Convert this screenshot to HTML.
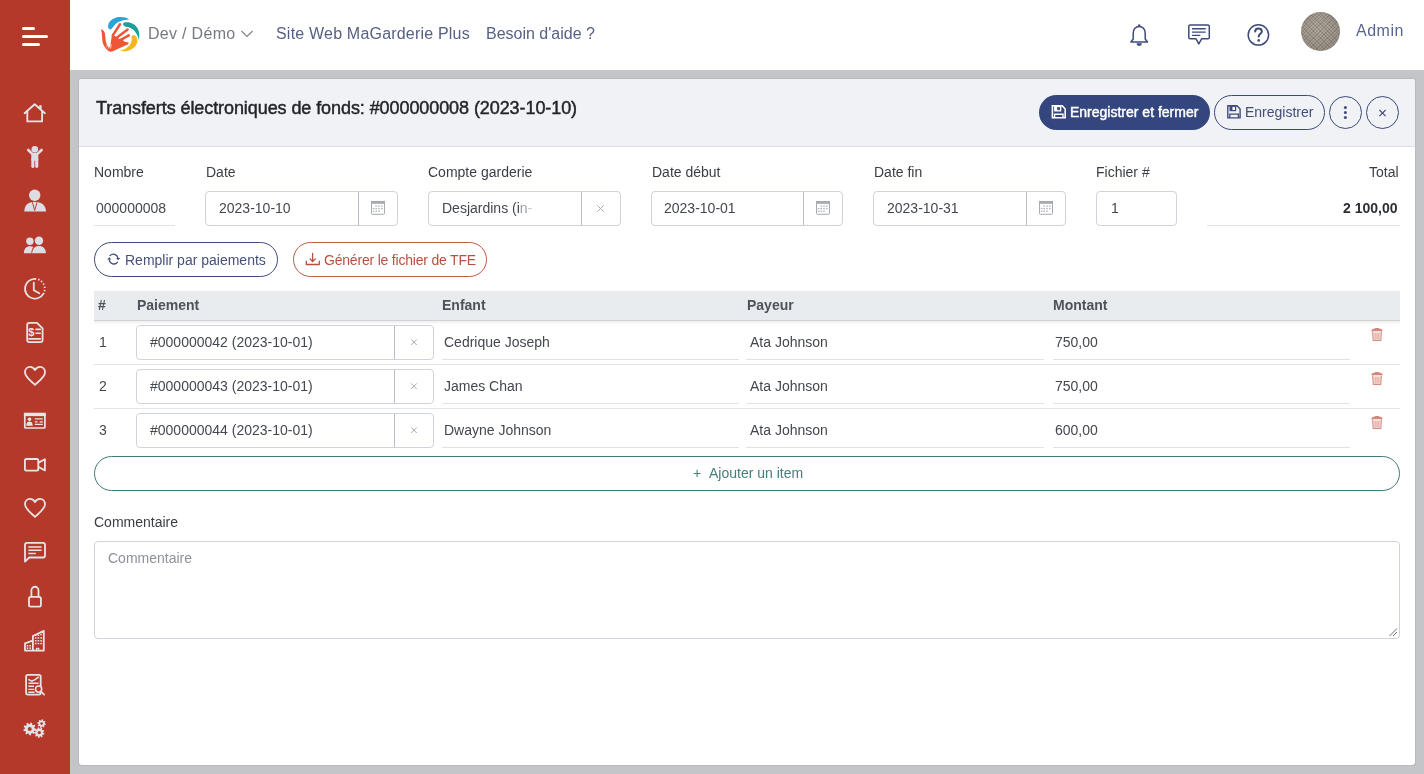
<!DOCTYPE html>
<html><head><meta charset="utf-8">
<style>
*{box-sizing:border-box;margin:0;padding:0}
html,body{width:1424px;height:774px;overflow:hidden;font-family:"Liberation Sans",sans-serif;background:#c4c5c9;color:#212529;position:relative}
.a{position:absolute}
.t{position:absolute;white-space:nowrap;line-height:1;will-change:transform}
#side{left:0;top:0;width:70px;height:774px;background:#b5392a}
#top{left:70px;top:0;width:1354px;height:70px;background:#fff}
#card{left:79px;top:79px;width:1336px;height:686px;background:#fff;border-radius:3px;box-shadow:0 0 0 1px #b9babe, 1px 1px 0 #adaeb2}
#chead{left:79px;top:79px;width:1336px;height:68px;background:#f0f2f6;border-bottom:1px solid #dcdfe4;border-radius:3px 3px 0 0}
.lbl{font-size:14px;color:#3a3e44}
.val{font-size:14px;color:#43484e}
.box{position:absolute;border:1px solid #ced4da;border-radius:4px;background:#fff}
.add{position:absolute;border-left:1px solid #b9bec4}
.ul{position:absolute;height:1px;background:#dfe2e6}
.nav{font-size:16px;color:#566084}
.pill{position:absolute;border-radius:18px}
svg{position:absolute;overflow:visible}
.ic{stroke:#e3dcdc;fill:none;stroke-width:2;stroke-linecap:round;stroke-linejoin:round}
.icf{fill:#dcdde4}
</style></head><body>
<div id="side" class="a"></div>
<div id="top" class="a"></div>
<div id="card" class="a"></div>
<div id="chead" class="a"></div>

<!-- sidebar hamburger -->
<div class="a" style="left:22px;top:27px;width:13px;height:3px;border-radius:2px;background:#fff"></div>
<div class="a" style="left:22px;top:35px;width:26px;height:3px;border-radius:2px;background:#fff"></div>
<div class="a" style="left:22px;top:43px;width:18px;height:3px;border-radius:2px;background:#fff"></div>


<!-- logo -->
<svg style="left:0;top:0" width="200" height="70" viewBox="0 0 200 70">
 <path fill="#2aa3d6" d="M129.2 19.4 C125 16.6 117.5 16.2 112.5 19.2 C109 21.3 107.6 24.6 108.2 27.6 C108.7 29.6 110.8 30 112 28.6 C113.2 26.4 115 24 117.6 22.4 C121 20.4 125.5 19.6 129.2 19.4 Z"/>
 <path fill="#1a9f9a" d="M124.2 22.6 C129.5 21.4 135 23.6 137.8 28.8 C139.4 32 139.6 36.4 138.8 40 C138.2 36.5 136.6 32.6 133.6 30 C131.4 28 128.6 27 126 26.8 C123.2 26.6 122.2 23.4 124.2 22.6 Z"/>
 <path fill="#f4b61f" d="M133.6 35 C136.8 35.6 138 39 137.2 42.6 C136.2 46.8 132 50 127 51 C124.5 51.5 121.8 51.3 119.6 50.8 C123.5 50 127.5 48 129.8 45 C131.4 43 131.8 40.6 131.6 38.6 C131.4 36.4 132.2 35 133.6 35 Z"/>
 <g fill="#ee5636">
  <path d="M112 34.4 L115 36 L118.5 38.4 L121.5 40.2 L122 43.5 L113.5 48 L110 47.6 Z"/>
  <path d="M101 29.2 C103 29.6 104.6 31.4 105 34 C105.4 37.4 105.6 41 106.4 43.6 C107.2 45.6 108.6 47 110 47.6 L113 43 C114 41.2 115.6 39.6 117.6 39.2 L121.4 38.8 L124.6 41.8 L128.6 42.4 C128.8 43.6 128.2 44.4 127 44.8 C123 46.6 118 48.8 113.5 51 C111.6 51.9 109.6 51.9 108.4 50.9 C105.2 48.4 103 45 102.4 41 C102 37 102.2 33 101 29.2 Z"/>
 </g>
 <g stroke="#ee5636" stroke-width="2.5" stroke-linecap="round" fill="none">
  <path d="M112.8 35.4 L120 24.2"/>
  <path d="M117 37.6 L127.6 29.6"/>
  <path d="M119 40.8 L128.8 35.4"/>
 </g>
 <g stroke="#fff" stroke-width="0.7" fill="none">
  <path d="M106.8 47.2 L107.6 42.6 M108.6 48.6 L109.6 43.2 M110.6 48.6 L111.2 44.2"/>
 </g>
</svg>
<!-- header nav -->
<div class="t nav" style="left:147.6px;top:26px;color:#767a81;letter-spacing:0.3px">Dev / Démo</div>
<svg style="left:239.5px;top:29px" width="14" height="10" viewBox="0 0 14 10"><path d="M1.5 2 L7 7.5 L12.5 2" fill="none" stroke="#80848b" stroke-width="1.2"/></svg>
<div class="t nav" style="left:276px;top:26px;letter-spacing:0.2px">Site Web MaGarderie Plus</div>
<div class="t nav" style="left:486px;top:26px">Besoin d'aide ?</div>

<!-- header right -->
<div class="t nav" style="left:1356px;top:22.5px;color:#5b6592;letter-spacing:0.5px">Admin</div>
<div class="a" style="left:1301px;top:12px;width:39px;height:39px;border-radius:50%;background:repeating-linear-gradient(45deg,rgba(70,62,55,.22) 0 1px,transparent 1px 2.5px),repeating-linear-gradient(-45deg,rgba(70,62,55,.22) 0 1px,transparent 1px 2.5px),radial-gradient(circle at 45% 45%,#b7aea4,#9d948a 70%,#8a8179)"></div>

<!-- card title -->
<div class="t" style="left:95.5px;top:98.6px;font-size:18px;color:#22252a;-webkit-text-stroke:0.45px #22252a;letter-spacing:-0.08px">Transferts électroniques de fonds: #000000008 (2023-10-10)</div>

<!-- card header buttons -->
<div class="pill" style="left:1039px;top:95px;width:171px;height:35px;background:#34467e"></div>
<div class="t" style="left:1069.5px;top:105px;font-size:14px;color:#fff;-webkit-text-stroke:0.45px #fff">Enregistrer et fermer</div>
<div class="pill" style="left:1214px;top:95px;width:111px;height:35px;border:1px solid #3b4a7a"></div>
<div class="t" style="left:1245px;top:105px;font-size:14px;color:#414d78">Enregistrer</div>
<div class="pill" style="left:1329px;top:96px;width:33px;height:33px;border:1px solid #3b4a7a;border-radius:50%"></div>
<div class="pill" style="left:1366px;top:96px;width:33px;height:33px;border:1px solid #3b4a7a;border-radius:50%"></div>

<!-- form labels -->
<div class="t lbl" style="left:94.3px;top:165.4px">Nombre</div>
<div class="t lbl" style="left:205.8px;top:165.4px">Date</div>
<div class="t lbl" style="left:428.4px;top:165.4px">Compte garderie</div>
<div class="t lbl" style="left:651.9px;top:165.4px">Date début</div>
<div class="t lbl" style="left:873.9px;top:165.4px">Date fin</div>
<div class="t lbl" style="left:1096.3px;top:165.4px">Fichier #</div>
<div class="t lbl" style="left:1369.4px;top:165.4px">Total</div>

<!-- form inputs -->
<div class="ul" style="left:94px;top:225px;width:81px"></div>
<div class="t val" style="left:96.3px;top:200.9px">000000008</div>

<div class="box" style="left:205px;top:191px;width:193px;height:35px"><div class="add" style="left:152px;top:0;width:40px;height:33px"></div></div>
<div class="t val" style="left:218.6px;top:200.9px">2023-10-10</div>

<div class="box" style="left:428px;top:191px;width:193px;height:35px"><div class="add" style="left:152px;top:0;width:40px;height:33px"></div></div>
<div class="t val" style="left:441.6px;top:200.9px">Desjardins (i<span style="color:#9aa0a6">n</span><span style="color:#c8ccd0">-</span></div>

<div class="box" style="left:651px;top:191px;width:192px;height:35px"><div class="add" style="left:151px;top:0;width:40px;height:33px"></div></div>
<div class="t val" style="left:664px;top:200.9px">2023-10-01</div>

<div class="box" style="left:873px;top:191px;width:193px;height:35px"><div class="add" style="left:152px;top:0;width:40px;height:33px"></div></div>
<div class="t val" style="left:886.5px;top:200.9px">2023-10-31</div>

<div class="box" style="left:1096px;top:191px;width:81px;height:35px"></div>
<div class="t val" style="left:1110.7px;top:200.9px">1</div>

<div class="ul" style="left:1207px;top:225px;width:193px"></div>
<div class="t val" style="left:1342.9px;top:200.9px;font-weight:bold;color:#2b2f34">2 100,00</div>

<!-- action buttons -->
<div class="pill" style="left:94px;top:242px;width:184px;height:35px;border:1px solid #3e4b78"></div>
<div class="t" style="left:124.9px;top:252.9px;font-size:14px;color:#46517a">Remplir par paiements</div>
<div class="pill" style="left:293px;top:242px;width:194px;height:35px;border:1px solid #bf5a48"></div>
<div class="t" style="left:324px;top:252.9px;font-size:14px;color:#b8503e;letter-spacing:-0.2px">Générer le fichier de TFE</div>

<!-- table header -->
<div class="a" style="left:94px;top:291px;width:1306px;height:30px;background:#e9ecef;border-bottom:1px solid #cfd1d4"></div><div class="a" style="left:94px;top:321px;width:1306px;height:4px;background:linear-gradient(#efefef,#fff)"></div>
<div class="t" style="left:98.3px;top:297.9px;font-size:14px;font-weight:bold;color:#4d535a">#</div>
<div class="t" style="left:136.5px;top:297.9px;font-size:14px;font-weight:bold;color:#4d535a">Paiement</div>
<div class="t" style="left:442px;top:297.9px;font-size:14px;font-weight:bold;color:#4d535a">Enfant</div>
<div class="t" style="left:747.3px;top:297.9px;font-size:14px;font-weight:bold;color:#4d535a">Payeur</div>
<div class="t" style="left:1053px;top:297.9px;font-size:14px;font-weight:bold;color:#4d535a">Montant</div>

<!-- rows -->
<div class="t val" style="left:98.5px;top:334.9px">1</div>
<div class="box" style="left:136px;top:325px;width:298px;height:35px"><div class="add" style="left:257px;top:0;width:40px;height:33px"></div></div>
<div class="t val" style="left:150px;top:334.9px">#000000042 (2023-10-01)</div>
<div class="ul" style="left:442px;top:359px;width:297px"></div>
<div class="t val" style="left:444.3px;top:334.9px">Cedrique Joseph</div>
<div class="ul" style="left:746px;top:359px;width:298px"></div>
<div class="t val" style="left:749.5px;top:334.9px">Ata Johnson</div>
<div class="ul" style="left:1053px;top:359px;width:297px"></div>
<div class="t val" style="left:1055px;top:334.9px">750,00</div>
<div class="ul" style="left:94px;top:364px;width:1306px;background:#e3e6e9"></div>
<div class="t val" style="left:98.5px;top:378.9px">2</div>
<div class="box" style="left:136px;top:369px;width:298px;height:35px"><div class="add" style="left:257px;top:0;width:40px;height:33px"></div></div>
<div class="t val" style="left:150px;top:378.9px">#000000043 (2023-10-01)</div>
<div class="ul" style="left:442px;top:403px;width:297px"></div>
<div class="t val" style="left:444.3px;top:378.9px">James Chan</div>
<div class="ul" style="left:746px;top:403px;width:298px"></div>
<div class="t val" style="left:749.5px;top:378.9px">Ata Johnson</div>
<div class="ul" style="left:1053px;top:403px;width:297px"></div>
<div class="t val" style="left:1055px;top:378.9px">750,00</div>
<div class="ul" style="left:94px;top:408px;width:1306px;background:#e3e6e9"></div>
<div class="t val" style="left:98.5px;top:422.9px">3</div>
<div class="box" style="left:136px;top:413px;width:298px;height:35px"><div class="add" style="left:257px;top:0;width:40px;height:33px"></div></div>
<div class="t val" style="left:150px;top:422.9px">#000000044 (2023-10-01)</div>
<div class="ul" style="left:442px;top:447px;width:297px"></div>
<div class="t val" style="left:444.3px;top:422.9px">Dwayne Johnson</div>
<div class="ul" style="left:746px;top:447px;width:298px"></div>
<div class="t val" style="left:749.5px;top:422.9px">Ata Johnson</div>
<div class="ul" style="left:1053px;top:447px;width:297px"></div>
<div class="t val" style="left:1055px;top:422.9px">600,00</div>


<!-- ajouter -->
<div class="pill" style="left:94px;top:456px;width:1306px;height:35px;border:1px solid #3f7b78"></div>
<div class="t" style="left:693px;top:466px;font-size:14px;color:#437f7b">+</div>
<div class="t" style="left:708.5px;top:466px;font-size:14px;color:#437f7b">Ajouter un item</div>

<!-- commentaire -->
<div class="t lbl" style="left:94.4px;top:515px">Commentaire</div>
<div class="box" style="left:94px;top:541px;width:1306px;height:98px"></div>
<div class="t" style="left:107.5px;top:550.6px;font-size:14px;color:#8c9197">Commentaire</div>


<!-- sidebar icons -->
<svg style="left:0;top:0" width="70" height="774" viewBox="0 0 70 774">
<g stroke="#e8e4e6" fill="none" stroke-width="1.8" stroke-linecap="round" stroke-linejoin="round">
 <path d="M24.6 113.2 L34.7 104.3 L44.9 113.2"/>
 <path d="M27.3 110.8 V121.4 H42.1 V110.8"/>
 <path d="M40.4 105.2 V108.8" stroke-width="2.4" stroke-linecap="butt"/>
 <path d="M34.9 278.8 A9.9 9.9 0 1 0 43.5 293.6"/>
 <path d="M34.9 278.8 A9.9 9.9 0 0 1 43.5 293.6" stroke-dasharray="1.4 1.9" stroke-linecap="butt"/>
 <path d="M33.8 282.6 V290.2 L39.3 293.2"/>
 <path d="M29.3 322.8 H37 L42.6 328.4 V340 Q42.6 342.1 40.5 342.1 H29.3 Q27.2 342.1 27.2 340 V325 Q27.2 322.8 29.3 322.8 Z"/>
 <path d="M36 329.4 H40.3 M36 333.2 H40.3 M29 338.9 H40.3" stroke-width="1.6"/>
 <path d="M35 384.8 C31 381 25 377 25 372.2 C25 369 27.3 366.8 30 366.8 C32.2 366.8 34 368 35 370 C36 368 37.8 366.8 40 366.8 C42.7 366.8 45 369 45 372.2 C45 377 39 381 35 384.8 Z"/>
 <path d="M35 516.8 C31 513 25 509 25 504.2 C25 501 27.3 498.8 30 498.8 C32.2 498.8 34 500 35 502 C36 500 37.8 498.8 40 498.8 C42.7 498.8 45 501 45 504.2 C45 509 39 513 35 516.8 Z"/>
 <rect x="24.8" y="414" width="20.1" height="14" rx="0.8" stroke-width="1.7"/>
 <path d="M34.8 418.9 H42.8 M34.8 421.8 H37.6 M39.6 421.8 H42.8 M34.8 424.4 H42.8" stroke-width="1.3" stroke-linecap="butt"/>
 <rect x="24.9" y="459" width="13.4" height="11.6" rx="1.6"/>
 <path d="M38.6 462.6 L44.9 459.2 V470.4 L38.6 467"/>
 <path d="M27 542.8 H43 Q45 542.8 45 544.8 V555.5 Q45 557.5 43 557.5 H29.2 L25 561.6 V544.8 Q25 542.8 27 542.8 Z"/>
 <path d="M28.3 547 H41.6 M28.3 550.2 H41.6 M28.3 553.5 H35.8" stroke-width="1.5" stroke-linecap="butt"/>
 <path d="M31.4 596.6 V590.3 A3.55 3.55 0 0 1 38.5 590.3 V596.6"/>
 <rect x="29" y="596.8" width="11.9" height="9.8" rx="1.6"/>
 <path d="M25 650.6 V643.4 L32.8 640.6 M32.9 650.6 V636 L43.8 630.9 V650.6 Z M25 650.6 H43.8"/>
 <path d="M36.5 650.6 V648.3 H38.7 V650.6" stroke-width="1.3"/>
 <rect x="26.1" y="674.8" width="14.6" height="19.8" rx="1.8"/>
 <path d="M28.8 679.7 L31.6 681.2 L35.1 679.6 L38.4 677.2" stroke-width="1.5"/>
 <path d="M28.5 683.2 H38.6 M28.3 686.3 H34 M28.3 689.4 H34 M28.3 692.3 H34.5" stroke-width="1.4" stroke-linecap="butt"/>
 <circle cx="38.6" cy="689.1" r="3.1" stroke-width="1.6" fill="#b5392a"/>
 <path d="M40.9 691.4 L44.2 694.6" stroke-width="1.6"/>
</g>
<g fill="#e8e4e6">
 <rect x="23.9" y="412.7" width="21.9" height="3.4"/>
 <circle cx="29.5" cy="419.2" r="1.8"/>
 <path d="M26.3 425.8 C26.3 422.7 27.6 421.5 29.5 421.5 C31.4 421.5 32.7 422.7 32.7 425.8 Z"/>
 <g fill="#e8e4e6" stroke="none">
  <rect x="34.9" y="634.5" width="1.6" height="1.5"/><rect x="37.6" y="634.5" width="1.6" height="1.5"/><rect x="40.3" y="633.8" width="1.6" height="1.5"/>
  <rect x="34.9" y="637.2" width="1.6" height="1.5"/><rect x="37.6" y="637.2" width="1.6" height="1.5"/><rect x="40.3" y="637.2" width="1.6" height="1.5"/>
  <rect x="34.9" y="640" width="1.6" height="1.5"/><rect x="37.6" y="640" width="1.6" height="1.5"/><rect x="40.3" y="640" width="1.6" height="1.5"/>
  <rect x="34.9" y="642.8" width="1.6" height="1.5"/><rect x="37.6" y="642.8" width="1.6" height="1.5"/><rect x="40.3" y="642.8" width="1.6" height="1.5"/>
  <rect x="26.7" y="645" width="1.6" height="1.5"/><rect x="29.4" y="645" width="1.6" height="1.5"/>
  <rect x="26.7" y="647.4" width="1.6" height="1.5"/><rect x="29.4" y="647.4" width="1.6" height="1.5"/>
 </g>
</g>
<!-- filled people icons -->
<g fill="#dcdee6">
 <circle cx="34.8" cy="149.2" r="3.3"/>
 <path d="M28.2 150 L32 153.6" stroke="#dcdee6" stroke-width="2.6" stroke-linecap="round"/>
 <path d="M41.6 150 L37.8 153.6" stroke="#dcdee6" stroke-width="2.6" stroke-linecap="round"/>
 <rect x="31.3" y="152.8" width="7" height="8" rx="1.5"/>
 <rect x="31.3" y="158" width="3.1" height="10" rx="1.4"/>
 <rect x="35.2" y="158" width="3.1" height="10" rx="1.4"/>
 <circle cx="34.7" cy="195.3" r="5.7"/>
 <path d="M24.3 211.6 C24.3 205.5 28 201.8 34.7 201.8 C41.4 201.8 46 205.5 46 211.6 Z"/>
 <path d="M32.4 202.2 L34.7 210.5 L37 202.2" fill="none" stroke="#b5392a" stroke-width="0.9"/>
 <circle cx="29.9" cy="241.3" r="3.7"/>
 <circle cx="39" cy="240.7" r="4.2"/>
 <path d="M23.9 253.3 C23.9 248.8 26.4 246.3 29.9 246.3 C31.5 246.3 32.6 246.7 33.2 247.2 C32 248.6 31.4 250.6 31.4 253.3 Z"/>
 <path d="M32.2 253.3 C32.2 248.5 35 245.9 39 245.9 C43 245.9 45.9 248.5 45.9 253.3 Z"/>
</g>
<!-- dollar -->
<text x="31.4" y="335.6" font-family="Liberation Sans" font-size="11" font-weight="bold" fill="#e8e4e6" text-anchor="middle">$</text>
<!-- gears -->
<g fill="#e2e2e8"><path d="M36.09 728.65 L35.92 730.42 L34.37 730.39 L33.78 731.62 L34.76 732.82 L33.49 734.06 L32.32 733.04 L31.07 733.60 L31.06 735.15 L29.28 735.29 L29.04 733.76 L27.73 733.39 L26.72 734.56 L25.28 733.52 L26.07 732.20 L25.31 731.07 L23.78 731.33 L23.34 729.60 L24.80 729.09 L24.94 727.74 L23.60 726.95 L24.38 725.35 L25.82 725.90 L26.80 724.95 L26.28 723.49 L27.91 722.76 L28.66 724.11 L30.02 724.01 L30.56 722.56 L32.28 723.04 L31.98 724.56 L33.09 725.36 L34.44 724.60 L35.44 726.07 L34.23 727.04 L34.57 728.36 Z"/><path d="M45.90 723.78 L45.63 725.10 L44.50 724.95 L43.94 725.78 L44.51 726.77 L43.39 727.51 L42.70 726.61 L41.71 726.80 L41.42 727.90 L40.10 727.63 L40.25 726.50 L39.42 725.94 L38.43 726.51 L37.69 725.39 L38.59 724.70 L38.40 723.71 L37.30 723.42 L37.57 722.10 L38.70 722.25 L39.26 721.42 L38.69 720.43 L39.81 719.69 L40.50 720.59 L41.49 720.40 L41.78 719.30 L43.10 719.57 L42.95 720.70 L43.78 721.26 L44.77 720.69 L45.51 721.81 L44.61 722.50 L44.80 723.49 Z"/><path d="M44.53 733.45 L44.10 734.86 L42.79 734.55 L42.12 735.44 L42.76 736.61 L41.52 737.41 L40.72 736.34 L39.64 736.59 L39.38 737.90 L37.91 737.71 L37.99 736.38 L36.99 735.87 L35.95 736.71 L34.95 735.63 L35.86 734.65 L35.43 733.62 L34.09 733.59 L34.02 732.12 L35.35 731.96 L35.68 730.90 L34.67 730.02 L35.56 728.84 L36.69 729.57 L37.62 728.97 L37.42 727.65 L38.86 727.32 L39.24 728.60 L40.35 728.74 L41.04 727.59 L42.35 728.27 L41.83 729.50 L42.58 730.32 L43.85 729.89 L44.42 731.25 L43.23 731.85 L43.28 732.96 Z"/></g>
<g fill="#b5392a">
 <circle cx="29.7" cy="728.9" r="2"/><circle cx="41.6" cy="723.6" r="1.3"/><circle cx="39.3" cy="732.6" r="1.7"/>
</g>
</svg>

<!-- header icons -->
<svg style="left:0;top:0" width="1424" height="774" viewBox="0 0 1424 774">
<g stroke="#3f4b7b" fill="none" stroke-width="1.5" stroke-linejoin="round" stroke-linecap="round">
 <path d="M1130.9 42 H1147.5 L1145.2 39 V33.2 C1145.2 29.2 1142.6 26.4 1139.2 26.4 C1135.8 26.4 1133.2 29.2 1133.2 33.2 V39 Z"/>
 <path d="M1190.2 24.9 H1207.9 Q1209.3 24.9 1209.3 26.3 V37.4 Q1209.3 38.8 1207.9 38.8 H1201.6 L1198.8 43.9 L1196 38.8 H1190.2 Q1188.8 38.8 1188.8 37.4 V26.3 Q1188.8 24.9 1190.2 24.9 Z"/>
 <path d="M1192 28.7 H1205.7 M1192 32.1 H1205.7 M1192 35.4 H1200.3" stroke-width="1.4" stroke-linecap="butt"/>
 <circle cx="1258.4" cy="34.9" r="10.2"/>
</g>
<circle cx="1139.2" cy="25.4" r="1.2" fill="#3f4b7b"/>
<path d="M1136.6 43.2 A2.6 2.6 0 0 0 1141.8 43.2 Z" fill="#3f4b7b"/>
<path d="M1255.2 31.6 C1255.2 29.6 1256.6 28.4 1258.5 28.4 C1260.4 28.4 1261.8 29.6 1261.8 31.4 C1261.8 33.6 1258.7 34 1258.7 36.6" fill="none" stroke="#3f4b7b" stroke-width="2" stroke-linecap="round"/><circle cx="1258.7" cy="40.4" r="1.3" fill="#3f4b7b"/>

<!-- floppy white -->
<g stroke="#fff" fill="none" stroke-width="1.6" stroke-linejoin="miter">
 <path d="M1052.4 105.8 H1062.2 L1065.2 109 V117.8 H1052.4 Z"/>
 <rect x="1055" y="106.4" width="5.6" height="4.4" stroke-width="1.4"/>
 <path d="M1054.6 117.8 V114.2 H1063 V117.8" stroke-width="1.4"/>
</g>
<rect x="1054.2" y="105.8" width="3" height="5" fill="#fff"/>
<!-- floppy navy -->
<g stroke="#3f4b7b" fill="none" stroke-width="1.4" stroke-linejoin="miter">
 <path d="M1227.8 105.8 H1237 L1240.1 109 V117.9 H1227.8 Z"/>
 <rect x="1230.2" y="106.2" width="5.4" height="4.4" stroke-width="1.2"/>
 <path d="M1229.8 117.9 V114.1 H1238.4 V117.9" stroke-width="1.3"/>
</g>
<rect x="1229.8" y="105.8" width="2.6" height="4.8" fill="#3f4b7b"/>
<!-- kebab + close -->
<circle cx="1345.4" cy="107.6" r="1.5" fill="#3f4b7b"/>
<circle cx="1345.4" cy="112.6" r="1.5" fill="#3f4b7b"/>
<circle cx="1345.4" cy="117.6" r="1.5" fill="#3f4b7b"/>
<path d="M1379.4 110 L1385.6 116.2 M1385.6 110 L1379.4 116.2" stroke="#3f4b7b" stroke-width="1.1"/>

<!-- calendars -->
<g id="cal">
 <rect x="371.5" y="201.5" width="13" height="12.8" rx="0.8" fill="none" stroke="#a6abb0" stroke-width="1"/>
 <rect x="371" y="201" width="14" height="2.8" fill="#a6abb0"/>
 <g fill="#b3b7bc">
  <rect x="375.4" y="205.5" width="1.6" height="1.3"/><rect x="378.2" y="205.5" width="1.6" height="1.3"/><rect x="381" y="205.5" width="1.6" height="1.3"/>
  <rect x="372.8" y="208" width="1.6" height="1.3"/><rect x="375.4" y="208" width="1.6" height="1.3"/><rect x="378.2" y="208" width="1.6" height="1.3"/><rect x="381" y="208" width="1.6" height="1.3"/>
  <rect x="372.8" y="210.6" width="1.6" height="1.3"/><rect x="375.4" y="210.6" width="1.6" height="1.3"/><rect x="378.2" y="210.6" width="1.6" height="1.3"/>
 </g>
</g>
<use href="#cal" x="445" y="0"/>
<use href="#cal" x="668" y="0"/>

<!-- x in compte garderie and rows -->
<path d="M597.5 205.5 L603.5 211.5 M603.5 205.5 L597.5 211.5" stroke="#a4a9ae" stroke-width="1"/>
<g id="rx"><path d="M411.2 339.4 L416.8 345 M416.8 339.4 L411.2 345" stroke="#a4a9ae" stroke-width="1"/></g>
<use href="#rx" y="44"/><use href="#rx" y="88"/>

<!-- trash -->
<g id="tr" opacity="0.8">
 <path d="M1371.3 331.2 C1371.3 329.6 1373 328.8 1375 328.6 L1375.4 327.9 H1378.6 L1379 328.6 C1381 328.8 1382.7 329.6 1382.7 331.2 Z" fill="#c8685a"/>
 <path d="M1372.6 331.4 L1373.2 340.4 H1380.8 L1381.4 331.4" fill="#f3d9d4" stroke="#cf7567" stroke-width="1.1"/>
 <path d="M1375.2 333 V339 M1377 333 V339 M1378.8 333 V339" stroke="#d58a7e" stroke-width="0.9"/>
</g>
<use href="#tr" y="44"/><use href="#tr" y="88"/>

<!-- refresh icon -->
<g stroke="#3e4b78" fill="none" stroke-width="1.3" stroke-linecap="round">
 <path d="M110 255.6 A4.6 4.6 0 0 1 117.9 258"/>
 <path d="M117.4 262.3 A4.6 4.6 0 0 1 109.3 260"/>
</g>
<path d="M116.1 257.9 L120.2 257.9 L118.1 260.2 Z" fill="#3e4b78"/>
<path d="M107.2 259.6 L111.3 259.6 L109.3 257.3 Z" fill="#3e4b78"/>
<!-- download icon -->
<g stroke="#b8503e" fill="none" stroke-width="1.3" stroke-linecap="round" stroke-linejoin="round">
 <path d="M312.6 253.3 V261.3 M310 258.9 L312.6 261.5 L315.3 258.9"/>
 <path d="M306.3 261.2 V264.5 H319.3 V261.2"/>
</g>
<!-- resize handle -->
<path d="M1389.5 636 L1397 628.5 M1393 636 L1397 632" stroke="#6b6f75" stroke-width="1"/>
</svg>
</body></html>
